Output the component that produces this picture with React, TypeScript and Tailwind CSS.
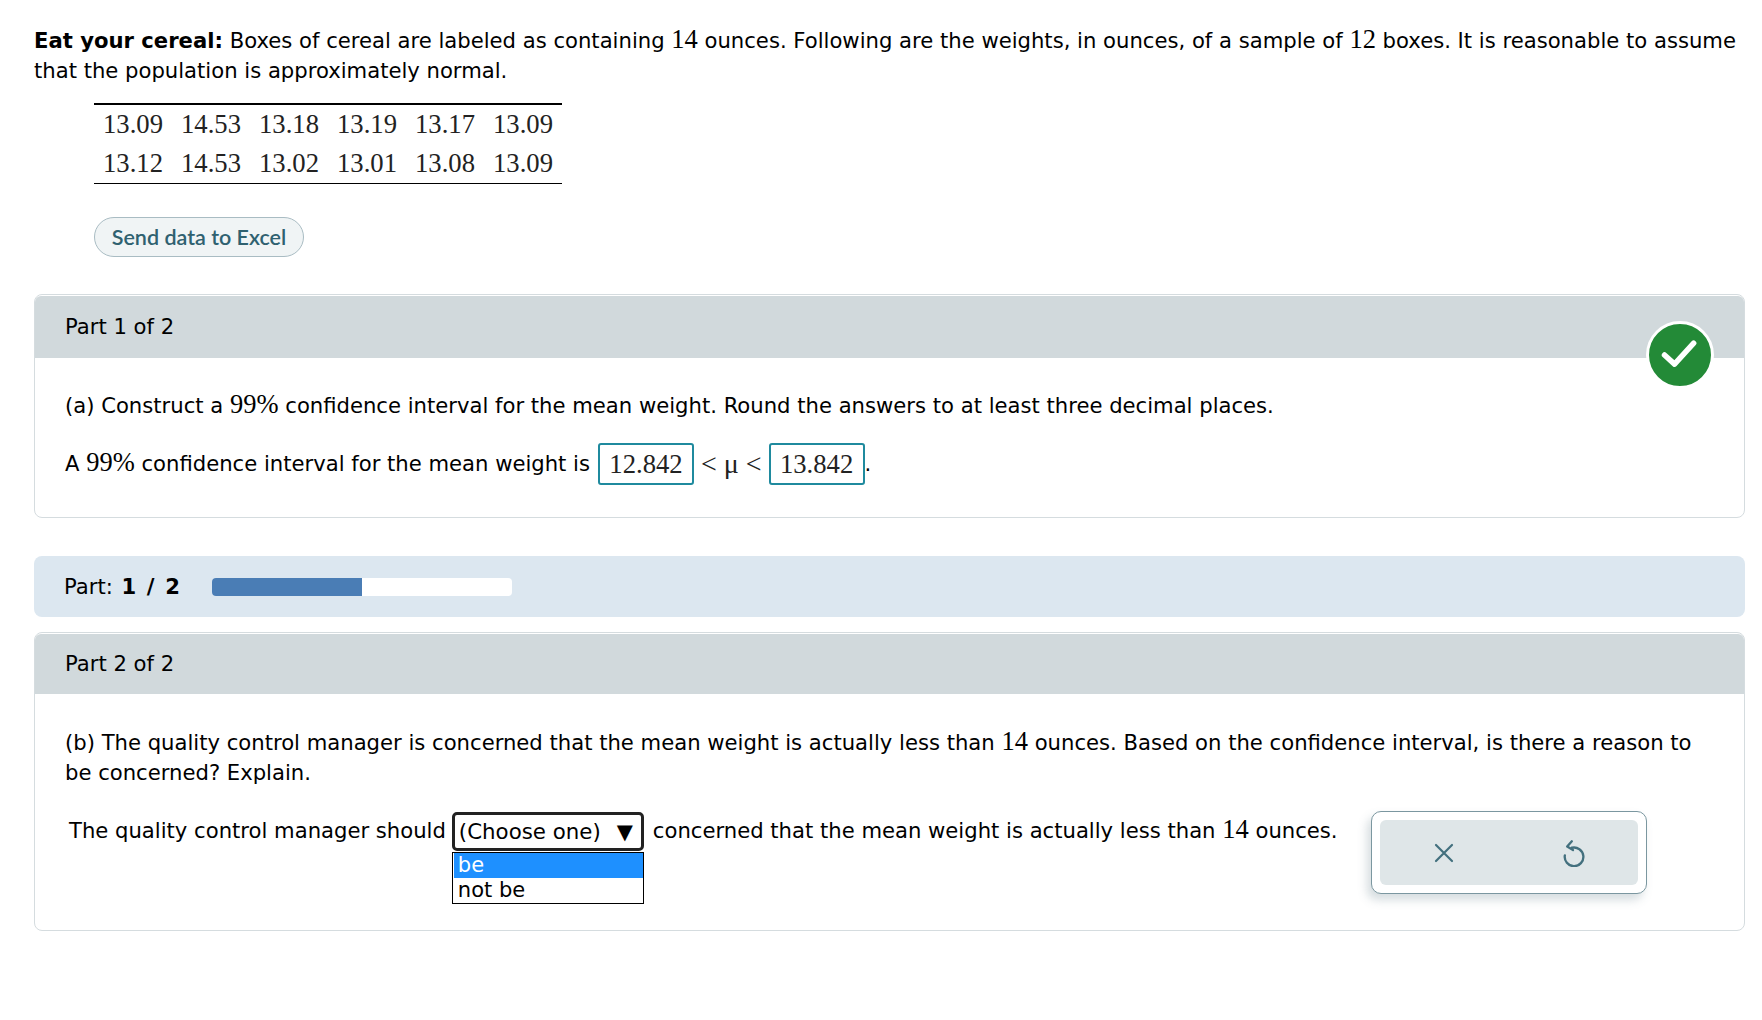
import React from "react";

const rows = [
  ["13.09", "14.53", "13.18", "13.19", "13.17", "13.09"],
  ["13.12", "14.53", "13.02", "13.01", "13.08", "13.09"],
];

const N = ({ children }: { children: React.ReactNode }) => (
  <span className="font-['Liberation_Serif',serif] text-[26.5px] leading-none">{children}</span>
);

const Box = ({ children }: { children: React.ReactNode }) => (
  <span className="inline-flex h-[42px] w-[96px] items-center justify-center rounded-[3px] border-2 border-[#1f8a9e] font-['Liberation_Serif',serif] text-[26.67px] text-[#222]">
    {children}
  </span>
);

export default function App() {
  return (
    <div className="h-[1020px] w-[1762px] bg-white pl-[34px] pr-[17px] pt-[26px] font-['DejaVu_Sans',sans-serif] text-[21.15px] leading-[30px] text-black">
      <p className="w-[1711px]">
        <b>Eat your cereal:</b> Boxes of cereal are labeled as containing <N>14</N> ounces. Following are the weights, in ounces, of a sample of <N>12</N> boxes. It is reasonable to assume that the population is approximately normal.
      </p>

      <div className="ml-[60px] mt-[17px] w-[468px] border-b-[1.5px] border-t-2 border-black font-['Liberation_Serif',serif] text-[26.67px] leading-[39px] text-[#222]">
        {rows.map((r, i) => (
          <div key={i} className="grid grid-cols-6 text-center">
            {r.map((v, j) => (
              <span key={j}>{v}</span>
            ))}
          </div>
        ))}
      </div>

      <button className="ml-[60px] mt-[33px] block h-[40px] w-[210px] rounded-[20px] border border-[#a9bcc3] bg-[#f0f4f5] text-center font-['Lato',sans-serif] text-[21.5px] font-semibold leading-[36px] text-[#2f6170]">
        Send data to Excel
      </button>

      <section className="relative mt-[37px] h-[224px] w-[1711px] rounded-[8px] border border-[#d5dcdf] bg-white">
        <div className="mt-[1px] flex h-[62px] items-center rounded-t-[6px] bg-[#d1d9dc] pl-[30px]">Part 1 of 2</div>
        <div className="absolute left-[1611px] top-[26px] flex h-[68px] w-[68px] items-center justify-center rounded-full border-[3px] border-white bg-[#238a37]">
          <svg viewBox="0 0 68 68" className="h-[62px] w-[62px]" fill="none" stroke="white" strokeWidth="6" strokeLinecap="round" strokeLinejoin="round">
            <path d="M17 34 L28 44 L49 21" />
          </svg>
        </div>
        <div className="pl-[30px]">
          <p className="mt-[33px]">
            (a) Construct a <N>99%</N> confidence interval for the mean weight. Round the answers to at least three decimal places.
          </p>
          <div className="mt-[22px] flex items-center">
            <span>A <N>99%</N> confidence interval for the mean weight is</span>
            <span className="ml-[8px]"><Box>12.842</Box></span>
            <span className="mx-[7px] font-['Liberation_Serif',serif] text-[28px] text-[#222]">&lt; μ &lt;</span>
            <Box>13.842</Box>
            <span>.</span>
          </div>
        </div>
      </section>

      <div className="mt-[38px] flex h-[61px] w-[1711px] items-center rounded-[8px] bg-[#dce7f0] pl-[30px]">
        <span>Part: <b className="ml-[2px] tracking-[1.6px]">1 / 2</b></span>
        <div className="ml-[31px] h-[18px] w-[300px] overflow-hidden rounded-[4px] bg-white">
          <div className="h-full w-1/2 bg-[#4a7db5]" />
        </div>
      </div>

      <section className="relative mt-[15px] h-[299px] w-[1711px] rounded-[8px] border border-[#d5dcdf] bg-white">
        <div className="mt-[1px] flex h-[60px] items-center rounded-t-[6px] bg-[#d1d9dc] pl-[30px]">Part 2 of 2</div>
        <div className="pl-[30px] pr-[40px]">
          <p className="mt-[34px]">
            (b) The quality control manager is concerned that the mean weight is actually less than <N>14</N> ounces. Based on the confidence interval, is there a reason to be concerned? Explain.
          </p>
          <div className="relative ml-[4px] mt-[22px] flex items-center">
            <span>The quality control manager should</span>
            <div className="relative ml-[6px] mt-[2px] flex h-[39px] w-[192px] items-center justify-between rounded-[5px] border-[3px] border-[#222] pl-[4px] pr-[8px] text-[21.33px]">
              <span>(Choose one)</span>
              <span className="text-[21px]">▼</span>
              <div className="absolute left-[-3px] top-[37px] w-[192px] border border-black bg-white text-[21px] leading-[25px]">
                <div className="ml-[1px] bg-[#1e90ff] pl-[4px] text-white">be</div>
                <div className="pl-[5px]">not be</div>
              </div>
            </div>
            <span className="ml-[9px]">concerned that the mean weight is actually less than <N>14</N> ounces.</span>
            <div className="absolute left-[1302px] top-[1px] flex h-[83px] w-[276px] rounded-[10px] border border-[#7b97a0] bg-white p-[8px] shadow-[-4px_6px_10px_rgba(90,120,130,0.25)]">
              <div className="flex flex-1 items-center justify-around rounded-[6px] bg-[#dfe6e8] text-[#43707e]">
                <svg viewBox="0 0 24 24" className="h-[24px] w-[24px]" fill="none" stroke="currentColor" strokeWidth="2.2" strokeLinecap="round">
                  <path d="M4 4 L20 20 M20 4 L4 20" />
                </svg>
                <svg viewBox="0 0 24 24" className="h-[28px] w-[28px]" fill="none" stroke="currentColor" strokeWidth="2" strokeLinecap="round" strokeLinejoin="round">
                  <path d="M11 7.5 A8 8 0 1 1 5 14" />
                  <path d="M11 2 L7 6.5 L12 9.5" />
                </svg>
              </div>
            </div>
          </div>
        </div>
      </section>
    </div>
  );
}
